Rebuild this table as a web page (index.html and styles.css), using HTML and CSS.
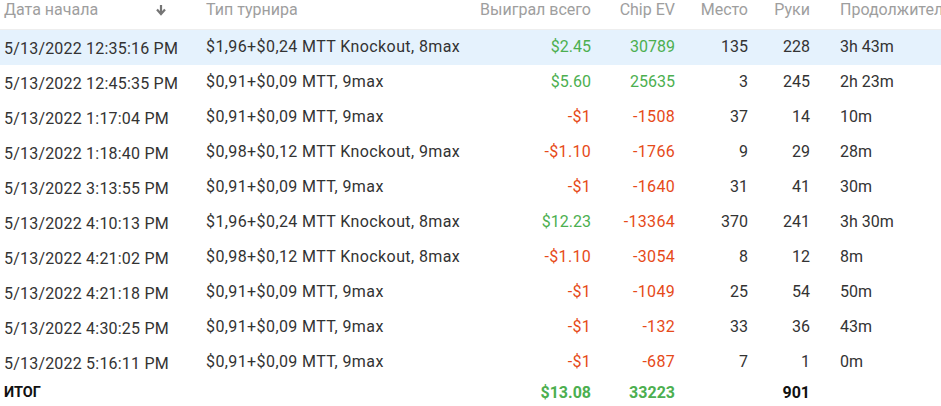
FILE: index.html
```html
<!DOCTYPE html>
<html lang="ru">
<head>
<meta charset="utf-8">
<title>Турниры</title>
<link rel="stylesheet" href="styles.css">
</head>
<body>
<table class="grid">
  <colgroup>
    <col class="c-date"><col class="c-type"><col class="c-won"><col class="c-ev"><col class="c-place"><col class="c-hands"><col class="c-dur">
  </colgroup>
  <thead>
    <tr class="head">
      <th class="left">Дата начала<svg class="sort" viewBox="0 0 12 12" width="12" height="12"><path d="M6 1v8M2 5.5 6 10l4-4.5" fill="none" stroke="#757575" stroke-width="2.2"/></svg></th>
      <th class="left">Тип турнира</th>
      <th class="num">Выиграл всего</th>
      <th class="num">Chip EV</th>
      <th class="num">Место</th>
      <th class="num">Руки</th>
      <th class="left dur">Продолжительность</th>
    </tr>
  </thead>
  <tbody>
    <tr class="sel"><td class="date">5/13/2022 12:35:16 PM</td><td class="type">$1,96+$0,24 MTT Knockout, 8max</td><td class="num pos">$2.45</td><td class="num pos">30789</td><td class="num">135</td><td class="num">228</td><td class="dur">3h 43m</td></tr>
    <tr><td class="date">5/13/2022 12:45:35 PM</td><td class="type">$0,91+$0,09 MTT, 9max</td><td class="num pos">$5.60</td><td class="num pos">25635</td><td class="num">3</td><td class="num">245</td><td class="dur">2h 23m</td></tr>
    <tr><td class="date">5/13/2022 1:17:04 PM</td><td class="type">$0,91+$0,09 MTT, 9max</td><td class="num neg">-$1</td><td class="num neg">-1508</td><td class="num">37</td><td class="num">14</td><td class="dur">10m</td></tr>
    <tr><td class="date">5/13/2022 1:18:40 PM</td><td class="type">$0,98+$0,12 MTT Knockout, 9max</td><td class="num neg">-$1.10</td><td class="num neg">-1766</td><td class="num">9</td><td class="num">29</td><td class="dur">28m</td></tr>
    <tr><td class="date">5/13/2022 3:13:55 PM</td><td class="type">$0,91+$0,09 MTT, 9max</td><td class="num neg">-$1</td><td class="num neg">-1640</td><td class="num">31</td><td class="num">41</td><td class="dur">30m</td></tr>
    <tr><td class="date">5/13/2022 4:10:13 PM</td><td class="type">$1,96+$0,24 MTT Knockout, 8max</td><td class="num pos">$12.23</td><td class="num neg">-13364</td><td class="num">370</td><td class="num">241</td><td class="dur">3h 30m</td></tr>
    <tr><td class="date">5/13/2022 4:21:02 PM</td><td class="type">$0,98+$0,12 MTT Knockout, 8max</td><td class="num neg">-$1.10</td><td class="num neg">-3054</td><td class="num">8</td><td class="num">12</td><td class="dur">8m</td></tr>
    <tr><td class="date">5/13/2022 4:21:18 PM</td><td class="type">$0,91+$0,09 MTT, 9max</td><td class="num neg">-$1</td><td class="num neg">-1049</td><td class="num">25</td><td class="num">54</td><td class="dur">50m</td></tr>
    <tr><td class="date">5/13/2022 4:30:25 PM</td><td class="type">$0,91+$0,09 MTT, 9max</td><td class="num neg">-$1</td><td class="num neg">-132</td><td class="num">33</td><td class="num">36</td><td class="dur">43m</td></tr>
    <tr><td class="date">5/13/2022 5:16:11 PM</td><td class="type">$0,91+$0,09 MTT, 9max</td><td class="num neg">-$1</td><td class="num neg">-687</td><td class="num">7</td><td class="num">1</td><td class="dur">0m</td></tr>
  </tbody>
  <tfoot>
    <tr class="total"><td class="label">ИТОГ</td><td></td><td class="num pos">$13.08</td><td class="num pos">33223</td><td class="num"></td><td class="num">901</td><td></td></tr>
  </tfoot>
</table>
</body>
</html>
```

FILE: styles.css
```css
html, body {
  margin: 0;
  padding: 0;
  background: #ffffff;
  overflow: hidden;
}
body {
  font-family: Roboto, "Noto Sans", Arial, sans-serif;
  color: #333333;
  width: 941px;
  height: 406px;
}
.grid {
  border-collapse: collapse;
  table-layout: fixed;
  width: 941px;
  font-size: 16px;
  white-space: nowrap;
}
.c-date { width: 202px; }
.c-type { width: 268px; }
.c-won { width: 125px; }
.c-ev { width: 84px; }
.c-place { width: 73px; }
.c-hands { width: 62px; }
.c-dur { width: 127px; }

th, td {
  padding: 0 4px;
  overflow: hidden;
}
.head th {
  height: 28px;
  vertical-align: top;
  padding-top: 1px;
  font-weight: 400;
  font-size: 16px;
  line-height: 18px;
  color: #9e9e9e;
  border-bottom: 1px solid #eeeeee;
}
.left { text-align: left; }
.num { text-align: right; }
.dur { padding-left: 26px; text-align: left; }
.sort {
  margin-left: 57px;
  vertical-align: -1px;
}
tbody tr { height: 35px; }
tbody td { vertical-align: middle; line-height: 18px; }
td.date { font-size: 16px; letter-spacing: 0.2px; padding-top: 3px; }
td.type { letter-spacing: 0.4px; }
td.num.neg { letter-spacing: 0.3px; }
tr.sel { background: #e5f2fd; }
.pos { color: #4caf50; }
.neg { color: #e64a19; }
.total { height: 26px; }
.total td {
  font-weight: 700;
  font-size: 16px;
  color: #111111;
  vertical-align: middle;
  padding-top: 0;
}
.total td.pos { color: #4caf50; }
.total .label { font-size: 14.5px; }
```
